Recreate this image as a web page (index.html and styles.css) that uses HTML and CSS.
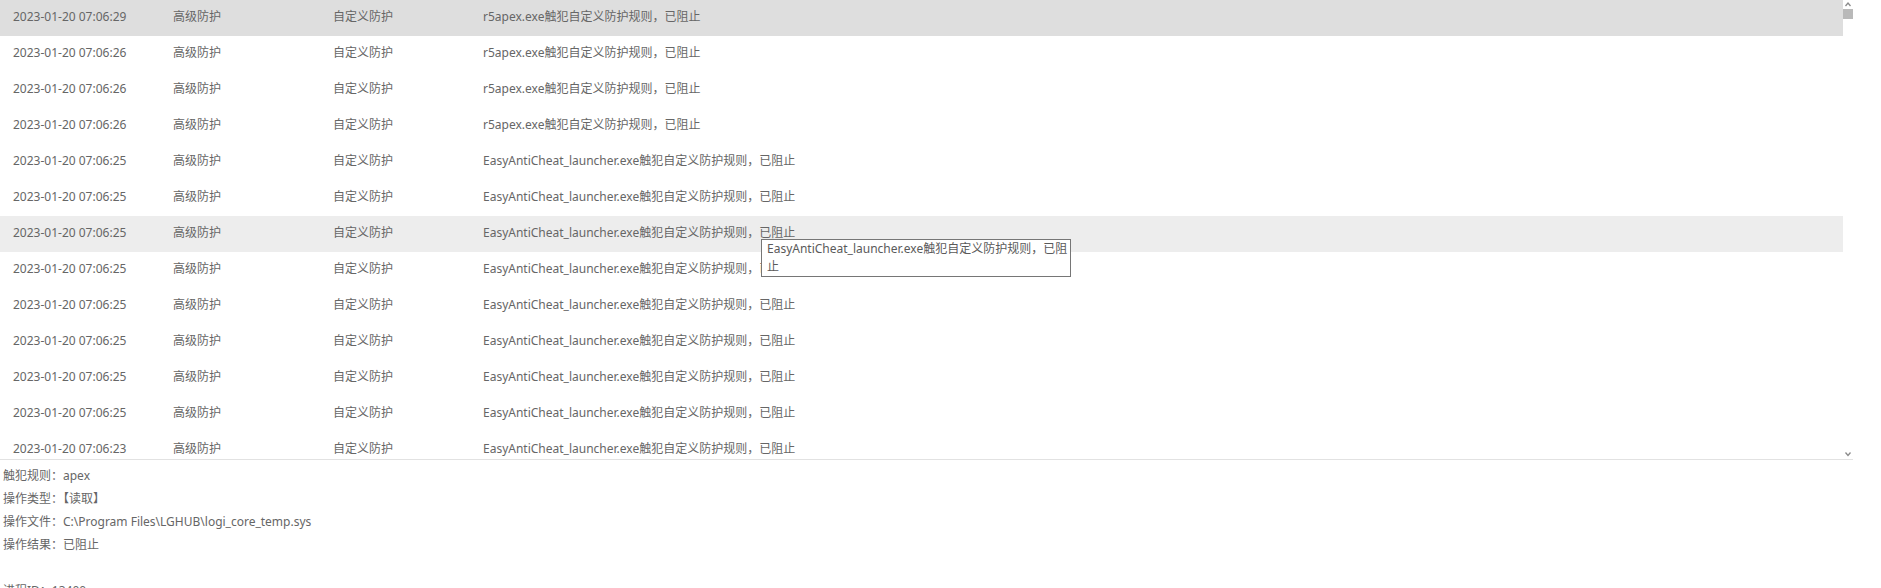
FILE: index.html
```html
<!DOCTYPE html>
<html lang="zh-CN">
<head>
<meta charset="utf-8">
<title>防护日志</title>
<link rel="stylesheet" href="styles.css">
</head>
<body>
<div class="panel">
  <div class="list-wrap">
    <div class="rows">
      <div class="row selected"><span>2023-01-20 07:06:29</span><span>高级防护</span><span>自定义防护</span><span>r5apex.exe触犯自定义防护规则，已阻止</span></div>
      <div class="row"><span>2023-01-20 07:06:26</span><span>高级防护</span><span>自定义防护</span><span>r5apex.exe触犯自定义防护规则，已阻止</span></div>
      <div class="row"><span>2023-01-20 07:06:26</span><span>高级防护</span><span>自定义防护</span><span>r5apex.exe触犯自定义防护规则，已阻止</span></div>
      <div class="row"><span>2023-01-20 07:06:26</span><span>高级防护</span><span>自定义防护</span><span>r5apex.exe触犯自定义防护规则，已阻止</span></div>
      <div class="row"><span>2023-01-20 07:06:25</span><span>高级防护</span><span>自定义防护</span><span>EasyAntiCheat_launcher.exe触犯自定义防护规则，已阻止</span></div>
      <div class="row"><span>2023-01-20 07:06:25</span><span>高级防护</span><span>自定义防护</span><span>EasyAntiCheat_launcher.exe触犯自定义防护规则，已阻止</span></div>
      <div class="row hover"><span>2023-01-20 07:06:25</span><span>高级防护</span><span>自定义防护</span><span>EasyAntiCheat_launcher.exe触犯自定义防护规则，已阻止</span></div>
      <div class="row"><span>2023-01-20 07:06:25</span><span>高级防护</span><span>自定义防护</span><span>EasyAntiCheat_launcher.exe触犯自定义防护规则，已阻止</span></div>
      <div class="row"><span>2023-01-20 07:06:25</span><span>高级防护</span><span>自定义防护</span><span>EasyAntiCheat_launcher.exe触犯自定义防护规则，已阻止</span></div>
      <div class="row"><span>2023-01-20 07:06:25</span><span>高级防护</span><span>自定义防护</span><span>EasyAntiCheat_launcher.exe触犯自定义防护规则，已阻止</span></div>
      <div class="row"><span>2023-01-20 07:06:25</span><span>高级防护</span><span>自定义防护</span><span>EasyAntiCheat_launcher.exe触犯自定义防护规则，已阻止</span></div>
      <div class="row"><span>2023-01-20 07:06:25</span><span>高级防护</span><span>自定义防护</span><span>EasyAntiCheat_launcher.exe触犯自定义防护规则，已阻止</span></div>
      <div class="row"><span>2023-01-20 07:06:23</span><span>高级防护</span><span>自定义防护</span><span>EasyAntiCheat_launcher.exe触犯自定义防护规则，已阻止</span></div>
    </div>
    <div class="scrollbar">
      <svg class="arrow" width="10" height="8" viewBox="0 0 10 8"><path d="M2.5 6 L5 3 L7.5 6" fill="none" stroke="#8a8a8a" stroke-width="1.3"/></svg>
      <div class="thumb"></div>
      <div class="track"></div>
      <svg class="arrow" width="10" height="10" viewBox="0 0 10 10"><path d="M2.5 3.5 L5 6.5 L7.5 3.5" fill="none" stroke="#8a8a8a" stroke-width="1.3"/></svg>
    </div>
  </div>
  <div class="detail">
    <p>触犯规则：apex</p>
    <p>操作类型：【读取】</p>
    <p>操作文件：C:\Program Files\LGHUB\logi_core_temp.sys</p>
    <p>操作结果：已阻止</p>
    <p>&nbsp;</p>
    <p>进程ID：13400</p>
  </div>
  <div class="tooltip">EasyAntiCheat_launcher.exe触犯自定义防护规则，已阻<br>止</div>
</div>
</body>
</html>
```

FILE: styles.css
```css
* { box-sizing: border-box; }
html, body {
  margin: 0;
  padding: 0;
  background: #ffffff;
}
body {
  font-family: "Noto Sans", "Noto Sans CJK SC", sans-serif;
  font-size: 12px;
  color: #666666;
  overflow: hidden;
  height: 588px;
}
.panel {
  position: relative;
  width: 1881px;
  height: 588px;
  overflow: hidden;
}
.list-wrap {
  display: flex;
  width: 1853px;
  height: 460px;
  border-bottom: 1px solid #e2e2e2;
  overflow: hidden;
}
.rows {
  width: 1843px;
  display: flex;
  flex-direction: column;
}
.row {
  flex: 0 0 36px;
  display: grid;
  grid-template-columns: 160px 160px 150px 1fr;
  padding-left: 13px;
  align-items: center;
  line-height: 18px;
  padding-bottom: 2px;
  white-space: nowrap;
}
.row.selected { background: #dedede; }
.row.hover { background: #ededed; }
.scrollbar {
  width: 10px;
  display: flex;
  flex-direction: column;
  align-items: center;
}
.scrollbar .arrow { display: block; flex: 0 0 auto; }
.thumb {
  width: 10px;
  height: 10px;
  margin-top: 1px;
  background: #b9b9b9;
}
.track { flex: 1; }
.detail {
  padding: 4px 0 0 3px;
}
.detail p {
  margin: 0;
  line-height: 23px;
  white-space: nowrap;
}
.tooltip {
  position: absolute;
  left: 761px;
  top: 239px;
  width: 310px;
  height: 38px;
  padding: 0 5px;
  background: #ffffff;
  border: 1px solid #767676;
  line-height: 18px;
  color: #5a5a5a;
  white-space: nowrap;
}
```
